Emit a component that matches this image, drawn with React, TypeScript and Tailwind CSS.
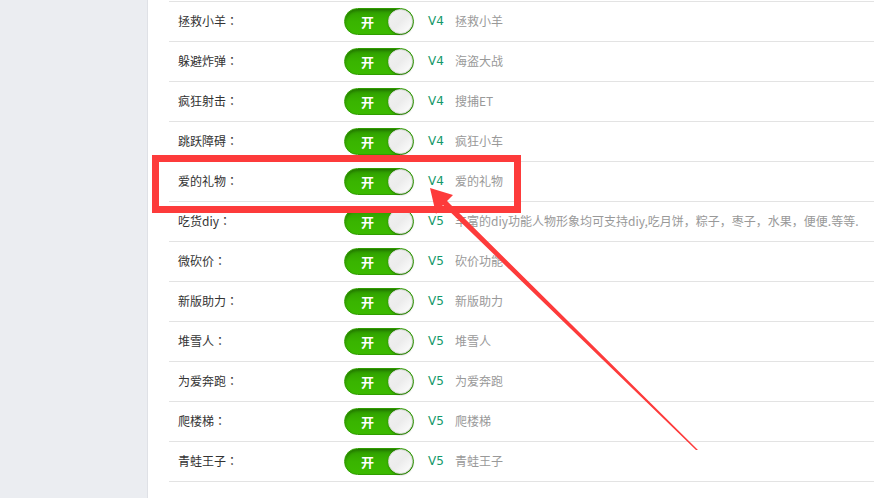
import React from "react";

const rows: [string, string, string][] = [
  ["拯救小羊", "V4", "拯救小羊"],
  ["躲避炸弹", "V4", "海盗大战"],
  ["疯狂射击", "V4", "搜捕ET"],
  ["跳跃障碍", "V4", "疯狂小车"],
  ["爱的礼物", "V4", "爱的礼物"],
  ["吃货diy", "V5", "丰富的diy功能人物形象均可支持diy,吃月饼，粽子，枣子，水果，便便.等等."],
  ["微砍价", "V5", "砍价功能"],
  ["新版助力", "V5", "新版助力"],
  ["堆雪人", "V5", "堆雪人"],
  ["为爱奔跑", "V5", "为爱奔跑"],
  ["爬楼梯", "V5", "爬楼梯"],
  ["青蛙王子", "V5", "青蛙王子"],
];

const cjk = '"Noto Sans CJK SC", sans-serif';
const cjkTC = '"Noto Sans CJK TC", sans-serif';

function Toggle() {
  return (
    <div className="relative w-[70px] h-[27px] rounded-full border border-[#2f9e00] bg-gradient-to-b from-[#2e9c00] via-[#39b400] to-[#3cba00] shadow-[inset_0_2px_3px_rgba(0,0,0,0.25)] flex items-center">
      <span className="ml-[16px] text-[13px] font-bold text-white leading-none" style={{ fontFamily: cjk }}>开</span>
      <div className="absolute right-[0px] top-[0px] w-[25px] h-[25px] rounded-full bg-gradient-to-br from-[#f2f2f2] via-[#ececec] to-[#ffffff] border border-[#d8d8d8] shadow-[0_1px_2px_rgba(0,0,0,0.3)]" />
    </div>
  );
}

export default function App() {
  return (
    <div className="relative w-[874px] h-[498px] flex bg-white overflow-hidden" style={{ fontFamily: cjk }}>
      <div className="w-[148px] h-full bg-[#ebedf1] border-r border-[#dfe1e6] shrink-0" />
      <div className="flex-1 pl-[21px] pt-px">
        {rows.map(([label, v, desc], i) => (
          <div key={i} className="h-[40px] border-t border-[#e3e3e3] flex items-center pl-[9px]">
            <div className="w-[166px] text-[12px] text-[#333] leading-none -mt-[1px]">
              {label}
              <span style={{ fontFamily: cjkTC }}>：</span>
            </div>
            <Toggle />
            <div className="ml-[14px] w-[27px] text-[12px] text-[#14996a] leading-none -mt-[1px]" style={{ fontFamily: '"DejaVu Sans", Verdana, sans-serif' }}>{v}</div>
            <div className="text-[12px] text-[#999] whitespace-nowrap leading-none -mt-[1px]">{desc}</div>
          </div>
        ))}
        <div className="border-t border-[#e3e3e3]" />
      </div>
      <div className="absolute left-[152px] top-[155px] w-[369px] h-[58px] border-[7px] border-[#fd3b3b]" />
      <svg className="absolute left-0 top-0" width="874" height="498" viewBox="0 0 874 498">
        <polygon points="430,188 453,195 447,201 698,450 696,450 443,205 436,214" fill="#fd3b3b" />
      </svg>
    </div>
  );
}
